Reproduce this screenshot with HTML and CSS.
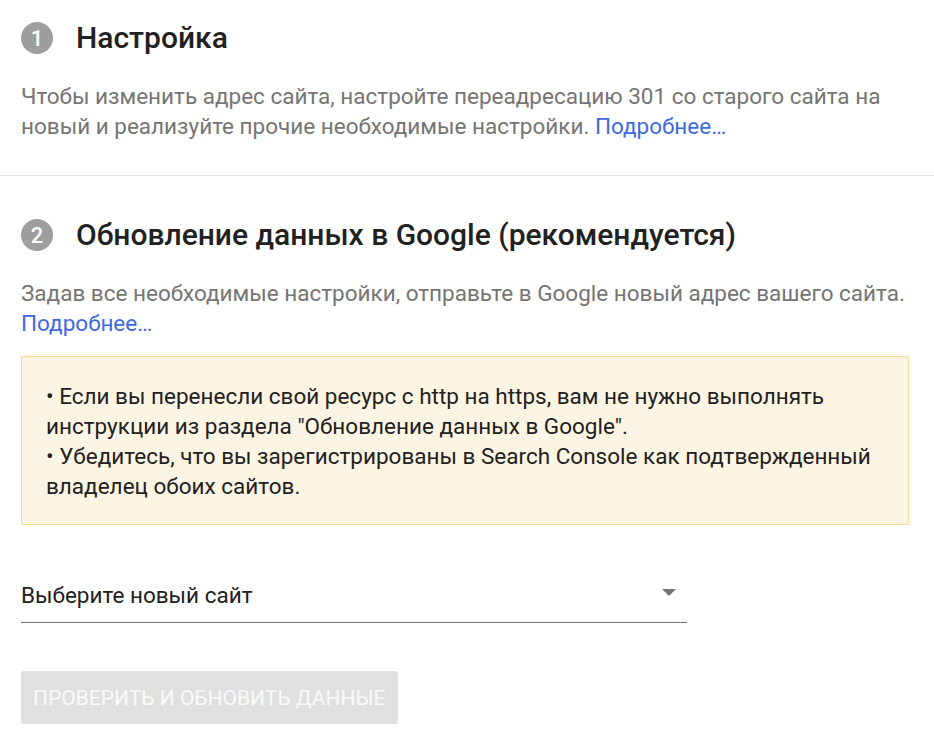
FILE: index.html
```html
<!DOCTYPE html>
<html lang="ru">
<head>
<meta charset="utf-8">
<link rel="stylesheet" href="styles.css">
</head>
<body>
<section class="step step-first">
  <div class="step-head">
    <span class="num">1</span>
    <h2 class="title">Настройка</h2>
  </div>
  <p class="desc">Чтобы изменить адрес сайта, настройте переадресацию 301 со старого сайта на новый и реализуйте прочие необходимые настройки. <a class="link" href="#">Подробнее…</a></p>
</section>
<section class="step step-second">
  <div class="step-head">
    <span class="num">2</span>
    <h2 class="title">Обновление данных в Google (рекомендуется)</h2>
  </div>
  <p class="desc">Задав все необходимые настройки, отправьте в Google новый адрес вашего сайта. <a class="link" href="#">Подробнее…</a></p>
  <div class="notice">
    • Если вы перенесли свой ресурс с http на https, вам не нужно выполнять инструкции из раздела "Обновление данных в Google".<br>
    • Убедитесь, что вы зарегистрированы в Search Console как подтвержденный владелец обоих сайтов.
  </div>
  <div class="select">
    <span class="select-label">Выберите новый сайт</span>
    <span class="arrow"></span>
  </div>
  <button class="btn" disabled>Проверить и обновить данные</button>
</section>
</body>
</html>
```
FILE: styles.css
```css
* { box-sizing: border-box; }
html, body { margin: 0; padding: 0; background: #fff; }
body {
  font-family: Roboto, "Noto Sans", sans-serif;
  color: #212121;
  width: 934px;
}
.step { padding-left: 21px; padding-right: 21px; }
.step-first { padding-top: 22px; padding-bottom: 34px; border-bottom: 1px solid #e0e0e0; }
.step-second { padding-top: 43px; }
.step-head { display: flex; align-items: center; height: 32px; }
.num {
  width: 32px; height: 32px; border-radius: 50%;
  background: #9e9e9e; color: #fff;
  display: flex; align-items: center; justify-content: center;
  font-size: 22px; font-weight: 500; flex: none;
}
.title {
  margin: 0 0 0 23px;
  font-size: 30px; font-weight: 500; color: #212121;
  line-height: 32px;
}
.desc {
  margin: 27px 0 0;
  font-size: 22.5px; line-height: 30px; color: #757575;
}
.link { color: #3e6ae1; text-decoration: none; }
.notice {
  margin-top: 18px;
  width: 888px;
  background: #fdf5e3;
  border: 1px solid #f6dc8c;
  border-radius: 2px;
  padding: 24px 24px 23px;
  font-size: 22.5px; line-height: 30px; color: #212121;
}
.select {
  margin-top: 50px;
  width: 666px;
  display: flex; align-items: center; justify-content: space-between;
  height: 48px;
  padding-bottom: 8px;
  border-bottom: 1px solid #757575;
}
.select-label { font-size: 22.5px; line-height: 40px; color: #212121; }
.arrow {
  width: 0; height: 0;
  border-left: 7px solid transparent;
  border-right: 7px solid transparent;
  border-top: 7px solid #757575;
  margin-right: 11px;
  margin-top: -5px;
}
.btn {
  display: block;
  margin-top: 48px;
  width: 377px; height: 53px;
  border: none; border-radius: 3px;
  background: #e0e0e0; color: #fafafa;
  font-family: Roboto, "Noto Sans", sans-serif;
  font-size: 21px; font-weight: 400;
  text-transform: uppercase;
  white-space: nowrap;
  padding: 0 12px;
  text-align: left;
}
```
